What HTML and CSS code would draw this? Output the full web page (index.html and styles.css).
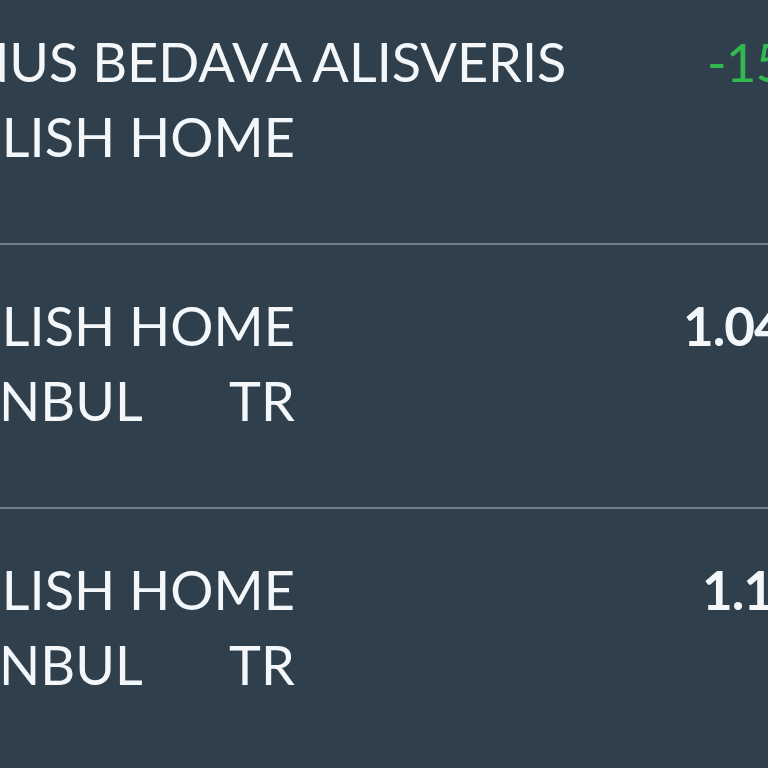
FILE: index.html
```html
<!DOCTYPE html>
<html lang="tr">
<head>
<meta charset="utf-8">
<title>Hesap Hareketleri</title>
<link rel="stylesheet" href="styles.css">
</head>
<body>
<main class="list">
  <section class="row">
    <div class="desc">
      <div class="line">BONUS BEDAVA ALISVERIS</div>
      <div class="line">ENGLISH HOME</div>
    </div>
    <div class="amount neg shift-neg">-150,00 TL</div>
  </section>
  <section class="row">
    <div class="desc">
      <div class="line">ENGLISH HOME</div>
      <div class="line place"><span class="city">ISTANBUL</span><span class="country">TR</span></div>
    </div>
    <div class="amount">1.047,50 TL</div>
  </section>
  <section class="row">
    <div class="desc">
      <div class="line">ENGLISH HOME</div>
      <div class="line place"><span class="city">ISTANBUL</span><span class="country">TR</span></div>
    </div>
    <div class="amount shift-3">1.199,00 TL</div>
  </section>
</main>
</body>
</html>
```
FILE: styles.css
```css
html, body {
  margin: 0;
  padding: 0;
}
body {
  background: #2f3f4b;
  width: 768px;
  height: 768px;
  overflow: hidden;
  font-family: Lato, "Open Sans", sans-serif;
  color: #f3f7fa;
}
.list {
  margin-top: -19px;
}
.row {
  display: flex;
  align-items: flex-start;
  height: 262px;
  border-bottom: 2px solid #6b7e8b;
  overflow: hidden;
}
.desc {
  flex: 0 0 793px;
  margin-left: -110px;
  padding-top: 43px;
}
.line {
  font-size: 54px;
  line-height: 75px;
  font-weight: 400;
  white-space: nowrap;
}
.place {
  display: flex;
}
.city {
  flex: 0 0 339px;
}
.amount {
  flex: 0 0 auto;
  padding-top: 43px;
  font-size: 53px;
  line-height: 75px;
  font-weight: 700;
  white-space: nowrap;
  letter-spacing: -1px;
}
.amount.neg {
  color: #2fb94f;
  font-weight: 400;
}
.shift-neg {
  margin-left: 24px;
}
.shift-3 {
  margin-left: 19px;
}
```
